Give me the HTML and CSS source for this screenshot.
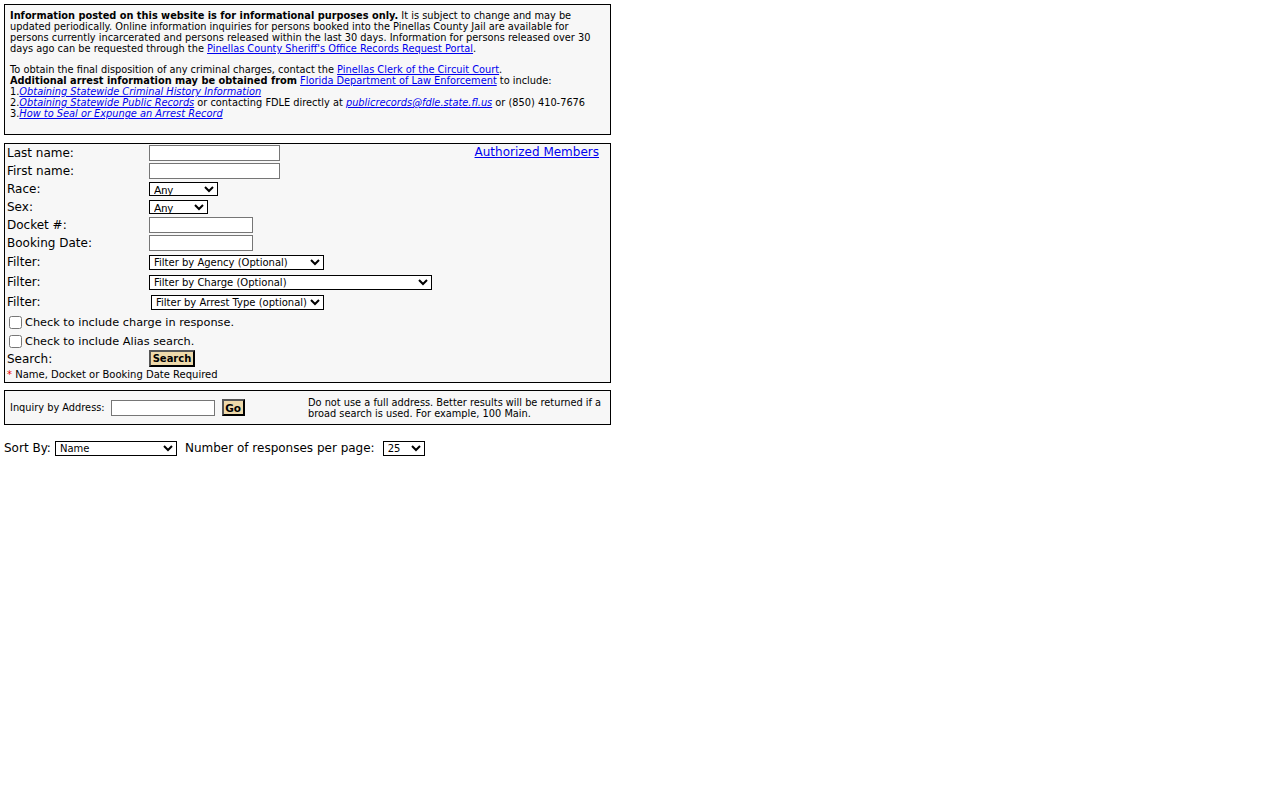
FILE: index.html
```html
<!DOCTYPE html>
<html>
<head>
<meta charset="utf-8">
<title>Inmate Inquiry</title>
<link rel="stylesheet" href="styles.css">
</head>
<body>
<div class="notice">
  <p><b>Information posted on this website is for informational purposes only.</b> It is subject to change and may be updated periodically. Online information inquiries for persons booked into the Pinellas County Jail are available for persons currently incarcerated and persons released within the last 30 days. Information for persons released over 30 days ago can be requested through the <a href="#">Pinellas County Sheriff's Office Records Request Portal</a>.</p>
  <p>To obtain the final disposition of any criminal charges, contact the <a href="#">Pinellas Clerk of the Circuit Court</a>.<br>
  <b>Additional arrest information may be obtained from</b> <a href="#">Florida Department of Law Enforcement</a> to include:<br>
  1.<a href="#"><i>Obtaining Statewide Criminal History Information</i></a><br>
  2.<a href="#"><i>Obtaining Statewide Public Records</i></a> or contacting FDLE directly at <a href="#"><i>publicrecords@fdle.state.fl.us</i></a> or (850) 410-7676<br>
  3.<a href="#"><i>How to Seal or Expunge an Arrest Record</i></a></p>
</div>

<div class="search">
  <a class="members" href="#">Authorized Members</a>
  <div class="row"><span class="lbl">Last name:</span><input class="txt w130" type="text"></div>
  <div class="row"><span class="lbl">First name:</span><input class="txt w130" type="text"></div>
  <div class="row"><span class="lbl">Race:</span><select class="sel w69"><option>Any</option></select></div>
  <div class="row"><span class="lbl">Sex:</span><select class="sel w59"><option>Any</option></select></div>
  <div class="row"><span class="lbl">Docket #:</span><input class="txt w103" type="text"></div>
  <div class="row"><span class="lbl">Booking Date:</span><input class="txt w103" type="text"></div>
  <div class="row r20"><span class="lbl">Filter:</span><select class="sel dv w175"><option>Filter by Agency (Optional)</option></select></div>
  <div class="row r20"><span class="lbl">Filter:</span><select class="sel dv w283"><option>Filter by Charge (Optional)</option></select></div>
  <div class="row r20"><span class="lbl">Filter:</span><select class="sel dv w173 off2"><option>Filter by Arrest Type (optional)</option></select></div>
  <div class="row chk c1"><input type="checkbox"><span>Check to include charge in response.</span></div>
  <div class="row chk c2"><input type="checkbox"><span>Check to include Alias search.</span></div>
  <div class="row srow"><span class="lbl">Search:</span><button class="btn">Search</button></div>
  <div class="req"><span class="star">*</span> Name, Docket or Booking Date Required</div>
</div>

<div class="address">
  <div class="addr-form">
    <span>Inquiry by Address:</span>
    <input class="txt w103" type="text">
    <button class="btn go">Go</button>
  </div>
  <div class="addr-note">Do not use a full address. Better results will be returned if a broad search is used. For example, 100 Main.</div>
</div>

<div class="sort">
  <span>Sort By:</span>
  <select class="sel dv w121"><option>Name</option></select>
  <span class="num">Number of responses per page:</span>
  <select class="sel dv w41"><option>25</option></select>
</div>
</body>
</html>
```
FILE: styles.css
```css
body {
  margin: 4px;
  font-family: "DejaVu Sans", Verdana, sans-serif;
  font-size: 12px;
  color: #000;
  background: #fff;
}
a { color: #0000ee; }
.notice {
  width: 595px;
  border: 1px solid #000;
  background: #f7f7f7;
  padding: 5px 5px 5px 5px;
  font-size: 9.8px;
  line-height: 11px;
}
.notice p { margin: 0 0 10px 0; }

.search {
  position: relative;
  width: 603px;
  height: 238px;
  margin-top: 8px;
  border: 1px solid #000;
  background: #f7f7f7;
  padding: 0 0 0 2px;
}
.members {
  position: absolute;
  right: 11px;
  top: 1px;
  font-size: 12px;
}
.row {
  display: flex;
  align-items: center;
  height: 18px;
}
.row.r20 { height: 20px; }
.lbl { width: 142px; flex: none; }
.txt {
  box-sizing: border-box;
  height: 16px;
  border: 1px solid #767676;
  padding: 0;
  margin: 0;
  background: #fff;
}
.sel {
  box-sizing: border-box;
  height: 14px;
  border: 1px solid #000;
  margin: 0;
  padding: 0;
  background: #fff;
  font-family: "Liberation Sans", Arial, sans-serif;
  font-size: 11px;
  border-radius: 0;
}
.sel.dv { font-family: "DejaVu Sans", sans-serif; font-size: 10px; height: 15px; }
.off2 { margin-left: 2px; }
.w130 { width: 131px; }
.w103 { width: 104px; }
.w69 { width: 69px; }
.w59 { width: 59px; }
.w175 { width: 175px; }
.w283 { width: 283px; }
.w173 { width: 173px; }
.w121 { width: 122px; }
.w41 { width: 42px; }
.chk { font-size: 11.3px; }
.chk.c1 { height: 21px; }
.chk.c2 { height: 17px; }
.chk input { margin: 0 3px 0 2px; width: 13px; height: 13px; }
.srow { height: 17px; }
.btn {
  box-sizing: border-box;
  font-family: "DejaVu Sans", sans-serif;
  font-weight: bold;
  font-size: 10px;
  background: #eed9aa;
  border: 2px solid #000;
  border-top-color: #555;
  border-left-color: #555;
  padding: 0 1px;
  width: 46px;
  height: 17px;
  margin: 0;
  color: #000;
}
.req { font-size: 10px; line-height: 16px; }
.star { color: #e00; }

.address {
  display: flex;
  align-items: center;
  width: 605px;
  height: 33px;
  margin-top: 7px;
  border: 1px solid #000;
  background: #f7f7f7;
  font-size: 9.8px;
}
.addr-form {
  display: flex;
  align-items: center;
  width: 298px;
  padding-left: 5px;
  flex: none;
  box-sizing: border-box;
}
.addr-form span { margin-right: 6px; }
.addr-form .go { margin-left: 7px; width: 23px; height: 17px; padding: 0; font-size: 10.5px; }
.addr-note { line-height: 11px; width: 300px; padding-left: 5px; }

.sort {
  display: flex;
  align-items: center;
  margin-top: 15px;
  height: 16px;
}
.sort .sel { margin-left: 4px; height: 15px; }
.sort .num { margin-left: 8px; }
.sort .w41 { margin-left: 8px; }
```
